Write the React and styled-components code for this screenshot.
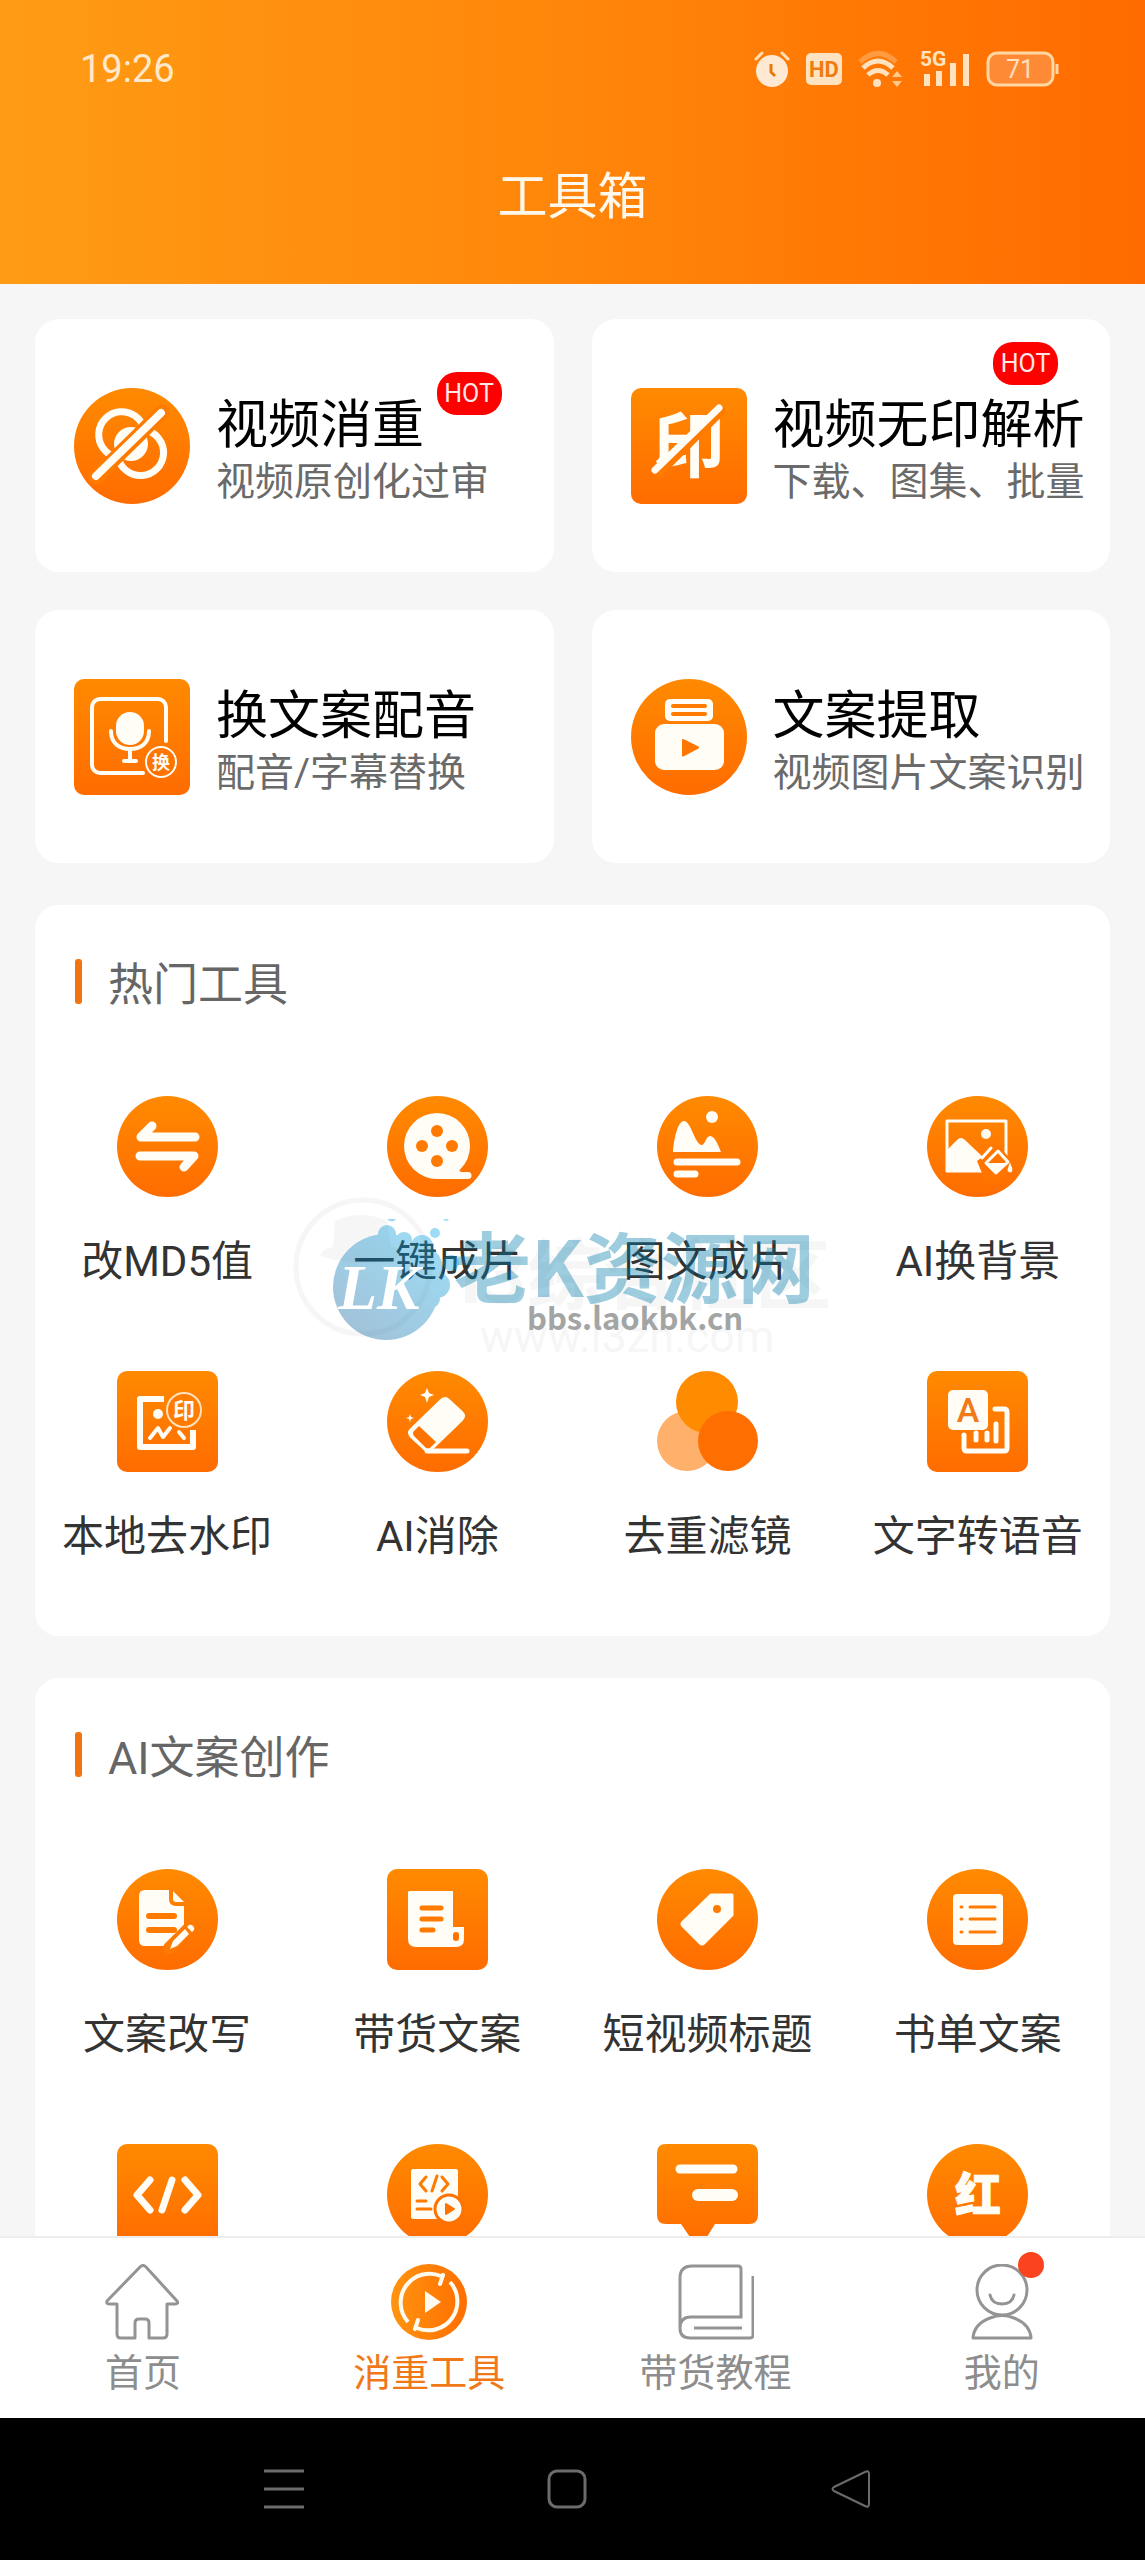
import React from 'react'
import styled, { createGlobalStyle } from 'styled-components'

const GlobalStyle = createGlobalStyle`
  *,
  *::before,
  *::after {
    box-sizing: border-box;
  }
  body {
    margin: 0;
    background-color: #f6f6f6;
    font-family: Roboto, 'Noto Sans CJK SC', sans-serif;
  }
  button {
    border: 0;
    padding: 0;
    background: none;
    font: inherit;
    color: inherit;
    cursor: pointer;
  }
  h1,
  h2,
  p {
    margin: 0;
    font-weight: 400;
  }
  svg {
    display: block;
    flex: none;
  }
`

const Screen = styled.div`
  display: flex;
  flex-direction: column;
  height: 100vh;
`

const Header = styled.header`
  flex: none;
  color: #fff8ec;
  background: linear-gradient(90deg, #ff9b14 0%, #ff860a 50%, #ff6b00 100%);
`

const StatusBar = styled.div`
  display: flex;
  align-items: center;
  justify-content: space-between;
  padding: 0 86px 0 80px;
  height: 138px;
  font-size: 38px;
  color: #ffe9cb;
`

const StatusIcons = styled.div`
  display: flex;
  align-items: center;
  gap: 16px;
`

const PageTitle = styled.h1`
  height: 146px;
  padding-top: 22px;
  font-size: 50px;
  line-height: 74px;
  text-align: center;
`

const Content = styled.main`
  flex: 1;
  min-height: 0;
  padding: 35px 35px 0;
  overflow-y: auto;
  scrollbar-width: none;
`

const Features = styled.div`
  display: grid;
  grid-template-columns: 1fr 1fr;
  gap: 38px;
`

const Feature = styled.button`
  position: relative;
  display: flex;
  align-items: center;
  gap: 26px;
  height: 253px;
  padding-left: 39px;
  border-radius: 24px;
  background-color: #fff;
  text-align: left;
  white-space: nowrap;
`

const FeatureTitle = styled.span`
  display: block;
  font-size: 52px;
  line-height: 72px;
  color: #000;
`

const FeatureDesc = styled.span`
  display: block;
  font-size: 39px;
  line-height: 40px;
  color: #6a6a6a;
`

const HotBadge = styled.span`
  position: absolute;
  right: 52px;
  top: ${({ $raised }) => ($raised ? '23px' : '53px')};
  width: 65px;
  border-radius: 20px;
  background-color: #fd0000;
  color: #ffe6e6;
  font-size: 25px;
  line-height: 43px;
  text-align: center;
`

const Section = styled.section`
  position: relative;
  height: 731px;
  margin-top: 42px;
  padding-top: 54px;
  border-radius: 24px;
  background-color: #fff;
`

const SectionTitle = styled.h2`
  display: flex;
  align-items: center;
  gap: 26px;
  height: 45px;
  padding-left: 40px;
  font-size: 45px;
  color: #666;
  &::before {
    content: '';
    width: 7px;
    height: 45px;
    border-radius: 3px;
    background-color: #f0740f;
  }
`

const ToolGrid = styled.div`
  display: grid;
  grid-template-columns: repeat(4, 1fr);
  margin: 92px -3px 0;
  row-gap: 78px;
`

const Tool = styled.button`
  display: flex;
  flex-direction: column;
  align-items: center;
  gap: 34px;
  font-size: 42px;
  line-height: 62px;
  color: #333;
  white-space: nowrap;
`

const Watermark = styled.div`
  position: absolute;
  left: 258px;
  top: 282px;
  pointer-events: none;
`

const TabBar = styled.nav`
  flex: none;
  display: grid;
  grid-template-columns: repeat(4, 1fr);
  height: 182px;
  border-top: 2px solid #ededed;
  background-color: #fff;
`

const Tab = styled.a`
  display: flex;
  flex-direction: column;
  align-items: center;
  gap: 5px;
  padding-top: 26px;
  font-size: 38px;
  line-height: 56px;
  text-decoration: none;
  color: ${({ $active }) => ($active ? '#f07818' : '#8d8d8d')};
`

const TabIcon = styled.span`
  position: relative;
  display: block;
`

const UnreadDot = styled.span`
  position: absolute;
  top: -12px;
  right: -4px;
  width: 26px;
  height: 26px;
  border-radius: 50%;
  background-color: #fb431f;
`

const SystemNav = styled.div`
  flex: none;
  display: grid;
  grid-template-columns: repeat(3, 1fr);
  place-items: center;
  height: 142px;
  padding: 0 152px 0 142px;
  background-color: #000;
`

const cjk = "'Noto Sans CJK SC', sans-serif"

// Orange plate shared by every tool icon; children are drawn on top in white
function Plate({ round, size = 101, box = 101, radius = 10, shape, children }) {
  const id = React.useId()
  const fill = `url(#${id})`
  return (
    <svg width={size} height={size} viewBox={`0 0 ${box} ${box}`} fill="#fffdf6" stroke="none" strokeLinecap="round" strokeLinejoin="round" aria-hidden="true">
      <defs>
        <linearGradient id={id} x1="0" y1="0" x2="0" y2="1">
          <stop offset="0" stopColor="#ff8a00" />
          <stop offset="1" stopColor="#ff6c00" />
        </linearGradient>
      </defs>
      {shape && <path d={shape} fill={fill} />}
      {!shape && round && <circle cx={box / 2} cy={box / 2} r={box / 2} fill={fill} />}
      {!shape && !round && <rect width={box} height={box} rx={radius} fill={fill} />}
      {children}
    </svg>
  )
}

const white = { fill: 'none', stroke: '#fffdf6' }
const orange = { fill: 'none', stroke: '#ff7b00' }

const DedupeIcon = () => (
  <Plate round size={116} box={116}>
    <g {...white} strokeWidth="7">
      <path d="M42 69A23 23 0 1 1 70 41" />
      <path d="M71 42A23 23 0 1 1 44 69" />
    </g>
    <circle cx="57" cy="56" r="17" />
    <path d="M88 24 22 89" {...orange} strokeWidth="15" />
    <path d="M87 25 22 88" {...white} strokeWidth="8" />
  </Plate>
)

const NoMarkIcon = () => (
  <Plate size={116} box={116}>
    <text x="58" y="83" fontSize="72" fontWeight="700" fontFamily={cjk} textAnchor="middle">印</text>
    <path d="M90 23 28 85" {...orange} strokeWidth="9" />
    <path d="M88 20 24 82" {...white} strokeWidth="7" />
  </Plate>
)

const DubIcon = () => (
  <Plate size={116} box={116}>
    <path d="M92 62V28a8 8 0 0 0-8-8H26a8 8 0 0 0-8 8v58a8 8 0 0 0 8 8h43" {...white} strokeWidth="4" />
    <rect x="42" y="33" width="28" height="33" rx="14" />
    <path d="M37 52c0 12 8 18 19 18s19-6 19-18M56 71v11M50 82h12" {...white} strokeWidth="4" />
    <circle cx="87" cy="83" r="15" {...white} strokeWidth="2" />
    <text x="87" y="90" fontSize="18" fontWeight="700" fontFamily={cjk} textAnchor="middle">换</text>
  </Plate>
)

const ExtractIcon = () => (
  <Plate round size={116} box={116}>
    <rect x="34" y="20" width="48" height="22" rx="5" />
    <path d="M42 27h32M42 35h32" {...orange} strokeWidth="4" />
    <rect x="24" y="45" width="69" height="46" rx="9" />
    <path d="m52 61 15 7.500-15 8z" fill="#ff7600" stroke="#ff7600" strokeWidth="2" />
  </Plate>
)

const Md5Icon = () => (
  <Plate round>
    <path d="M78 41H24L35 30M23 60H77L67 71" {...white} strokeWidth="9" />
  </Plate>
)

const ReelIcon = () => (
  <Plate round>
    <circle cx="50" cy="50" r="33" />
    <path d="M50 83h31a3 3 0 0 0 0-7h-7l-10-10z" />
    <g fill="#ff7a00">
      <circle cx="50" cy="35" r="6" />
      <circle cx="35" cy="50" r="6" />
      <circle cx="65" cy="50" r="6" />
      <circle cx="50" cy="65" r="6" />
    </g>
  </Plate>
)

const ArticleFilmIcon = () => (
  <Plate round>
    <circle cx="55" cy="21" r="6" />
    <path d="M16 56c1-14 5-31 11-31 7 0 11 24 18 24 3 0 4-9 8-9 5 0 8 9 11 16z" />
    <path d="M20 66h60M20 78h18" {...white} strokeWidth="7" />
  </Plate>
)

const BackgroundIcon = () => (
  <Plate round>
    <rect x="20" y="25" width="59" height="50" {...white} strokeWidth="3" />
    <circle cx="59" cy="38" r="5" />
    <path d="m20 54 10-10q4-4 8 0l20 19v13H20z" />
    <path d="m71 50 17 17-17 20H59L50 65z" fill="#ff7500" />
    <path d="M64 52 55 62" {...white} strokeWidth="3" />
    <path d="m71 55 10 11-12 11-10-10z" {...white} strokeWidth="3" />
    <path d="M60 67h20L69 77z" />
    <path d="M83 68q-4 8 0 8t0-8z" stroke="#fffdf6" />
  </Plate>
)

const LocalMarkIcon = () => (
  <Plate>
    <path d="M47 28H23v48h53V59" {...white} strokeWidth="6" strokeLinecap="butt" />
    <circle cx="41" cy="43" r="5" />
    <path d="m33 67 8-10 5 9 7-9" {...white} strokeWidth="4" />
    <path d="m62 61 5 6" {...white} strokeWidth="4" />
    <circle cx="67" cy="39" r="17" fill="#ff7c00" stroke="#ffe2bd" strokeWidth="2" />
    <text x="67" y="47" fontSize="22" fontWeight="700" fontFamily={cjk} textAnchor="middle">印</text>
  </Plate>
)

const EraserIcon = () => (
  <Plate round>
    <path d="m54 29-30 29q-4 4 0 8l13 12q4 4 8 0l30-29q4-4 0-8L62 29q-4-4-8 0z" stroke="#fffdf6" strokeWidth="2" />
    <path d="m32 55 17 16-6 6q-2 1-4 0L27 65q-2-3 0-5z" fill="#ff7400" />
    <path d="M40 80h40" {...white} strokeWidth="5" />
    <path d="m40 17 2 5 5 2-5 2-2 6-2-6-5-2 5-2zM23 43l1 3 3 1-3 1-1 3-1-3-3-1 3-1z" />
  </Plate>
)

const FilterIcon = () => (
  <svg width="101" height="101" viewBox="0 0 101 101" aria-hidden="true">
    <circle cx="30" cy="70" r="30" fill="#ffb06b" />
    <circle cx="50" cy="31" r="31" fill="#ff8b00" />
    <circle cx="71" cy="70" r="30" fill="#ff6e00" />
  </svg>
)

const SpeechIcon = () => (
  <Plate>
    <path d="M68 38h9q3 0 3 3v36q0 3-3 3H40q-3 0-3-3V64" {...white} strokeWidth="5" />
    <path d="M49 62v7M60 62v7M69 53v17" {...white} strokeWidth="5" />
    <rect x="21" y="19" width="40" height="40" rx="5" />
    <text x="41" y="51" fontSize="34" fontWeight="500" fill="#f17a18" textAnchor="middle">A</text>
  </Plate>
)

const RewriteIcon = () => (
  <Plate round>
    <path d="M28 21h24v9q0 7 7 7h8v21L53 77H28q-6 0-6-6V27q0-6 6-6z" />
    <path d="m56 22 11 11h-8q-3 0-3-3z" />
    <path d="M32 47h25M32 61h25" {...orange} strokeWidth="6" />
    <path d="m73 58-21 21" {...orange} strokeWidth="12" />
    <path d="m68 60 4 5-12 12-7 3 3-8zM70 58l2-2q2-1 4 1t1 4l-2 2z" />
  </Plate>
)

const GoodsCopyIcon = () => (
  <Plate>
    <path d="M22 22h44v36h11v12q0 8-8 8H29q-8 0-8-8V23z" />
    <path d="M35 39h19M35 50h19M35 61h11" {...orange} strokeWidth="5" />
    <rect x="66" y="63" width="6" height="9" rx="3" fill="#ff7200" />
  </Plate>
)

const TagIcon = () => (
  <Plate round>
    <path d="M54 26 26 53q-2 2 0 4l17 17q2 2 4 0l28-28V26z" stroke="#fffdf6" strokeWidth="3" />
    <circle cx="60" cy="40" r="4" fill="#ff7b00" />
  </Plate>
)

const ListIcon = () => (
  <Plate round>
    <rect x="26" y="25" width="50" height="51" rx="4" />
    <path d="M34 38h1M34 50h1M34 63h1M43 38h25M43 50h25M43 63h25" {...orange} strokeWidth="3" />
  </Plate>
)

const CodeIcon = () => (
  <Plate>
    <path d="M33 36 20 51l13 15M55 36 45 66M68 36l13 15-13 15" {...white} strokeWidth="7" />
  </Plate>
)

const CodeDocIcon = () => (
  <Plate round>
    <rect x="24" y="25" width="47" height="50" rx="2" />
    <path d="m39 33-6 7 6 7M50 32l-5 15M55 33l6 7-6 7M30 57h9M30 65h14" {...orange} strokeWidth="3" />
    <circle cx="62" cy="65" r="14" stroke="#ff7200" strokeWidth="3" />
    <path d="M59 60v10l8-5z" fill="#ff7200" stroke="#ff7200" strokeWidth="2" />
  </Plate>
)

const BubbleIcon = () => (
  <Plate shape="M9 0h83q9 0 9 9v62q0 9-9 9H58L48 96q-6 7-13 0L24 80H9q-9 0-9-9V9q0-9 9-9z">
    <path d="M23 25h53" {...white} strokeWidth="9" />
    <path d="M41 51h34" {...white} strokeWidth="12" />
  </Plate>
)

const RedIcon = () => (
  <Plate round>
    <text x="51" y="67" fontSize="46" fontWeight="900" fontFamily={cjk} textAnchor="middle" stroke="#fffdf6">红</text>
  </Plate>
)

const StatusGlyphs = () => (
  <StatusIcons>
    <svg width="36" height="36" viewBox="0 0 36 36" fill="none" aria-hidden="true">
      <circle cx="18" cy="20" r="16" fill="#ffe9d2" />
      <path d="m2 8 6-6M34 8l-6-6" stroke="#ffe0b8" strokeWidth="3" strokeLinecap="round" />
      <path d="M17 13v8l4 4" stroke="#e8780a" strokeWidth="3" />
    </svg>
    <svg width="36" height="32" viewBox="0 0 36 32" aria-hidden="true">
      <rect width="36" height="32" rx="5" fill="#ffe3c0" />
      <text x="18" y="24" fontSize="22" fontWeight="700" fill="#ef7c10" textAnchor="middle">HD</text>
    </svg>
    <svg width="46" height="38" viewBox="0 0 46 38" fill="none" strokeWidth="5" aria-hidden="true">
      <path d="M2 12q18-17 36 0" stroke="#ff9a40" />
      <path d="M5 18q15-14 30 0" stroke="#ffe3c0" />
      <path d="M10 25q10-9 20 0" stroke="#ffe3c0" />
      <circle cx="19" cy="33" r="4" fill="#ffe3c0" />
      <path d="m34 27 5-6 5 6zM34 31h10l-5 6z" fill="#ffc98c" />
    </svg>
    <svg width="50" height="44" viewBox="0 -4 50 44" fill="#ffe3c0" aria-hidden="true">
      <text x="0" y="15" fontSize="21" fontWeight="700">5G</text>
      <path d="M4 23h6v12H4zM16 20h6v15h-6zM30 12h6v23h-6zM43 3h6v32h-6z" />
    </svg>
    <svg width="73" height="36" viewBox="0 0 73 36" aria-hidden="true">
      <rect x="2" y="2" width="65" height="32" rx="9" fill="#ff8a35" stroke="#ffd7a3" strokeWidth="3" />
      <path d="M71 13v10" stroke="#ffd7a3" strokeWidth="3" />
      <text x="34" y="27" fontSize="25" fill="#ffe0bd" textAnchor="middle">71</text>
    </svg>
  </StatusIcons>
)

const HomeTabIcon = () => (
  <svg width="76" height="76" viewBox="0 0 76 76" fill="none" stroke="#949494" strokeWidth="3" strokeLinejoin="round" aria-hidden="true">
    <path d="M35 3 2 37q-1 3 2 3h8v30q0 4 4 4h14V59q0-4 4-4h6q4 0 4 4v15h14q4 0 4-4V40h8q4 0 2-3L41 3q-3-3-6 0z" />
  </svg>
)

const ToolsTabIcon = () => (
  <svg width="76" height="76" viewBox="0 0 76 76" fill="none" aria-hidden="true">
    <defs>
      <linearGradient id="toolsTab" x1="0" y1="0" x2="1" y2="0">
        <stop offset="0" stopColor="#ff9410" />
        <stop offset="1" stopColor="#ff6e00" />
      </linearGradient>
    </defs>
    <circle cx="38" cy="38" r="38" fill="url(#toolsTab)" />
    <g stroke="#fffaf0" strokeWidth="4">
      <path d="M17 58A29 29 0 0 1 50 12M59 18A29 29 0 0 1 26 64" />
      <path d="m52 11-3 9M24 65l3-9" strokeLinecap="round" />
    </g>
    <path d="m34 27 16 11-16 11z" fill="#fffaf0" />
  </svg>
)

const CourseTabIcon = () => (
  <svg width="76" height="76" viewBox="0 0 76 76" fill="none" stroke="#949494" strokeWidth="3" aria-hidden="true">
    <path d="M2 64V14Q2 2 14 2h46q3 0 3 3v48H13Q2 53 2 64q0 10 10 10h60q3 0 3-3V12M16 64h48" />
  </svg>
)

const MeTabIcon = () => (
  <svg width="76" height="76" viewBox="0 0 76 76" fill="none" stroke="#949494" strokeWidth="3" strokeLinejoin="round" aria-hidden="true">
    <circle cx="38" cy="26" r="25" />
    <path d="M26 31q2 9 12 9t12-9" strokeLinecap="round" />
    <path d="M26 54Q10 60 9 74h58q-1-14-17-20-12-5-24 0z" />
  </svg>
)

const LogoWatermark = () => (
  <Watermark aria-hidden="true">
    <svg width="560" height="190" viewBox="0 0 560 190" fill="none">
      <defs>
        <linearGradient id="drop" gradientUnits="userSpaceOnUse" x1="140" y1="50" x2="60" y2="150">
          <stop offset="0" stopColor="#00a5e6" />
          <stop offset="1" stopColor="#0b5f99" />
        </linearGradient>
      </defs>
      <g opacity=".03">
        <circle cx="70" cy="80" r="67" stroke="#000" strokeWidth="5" />
        <path d="M42 34q26-12 52 0l4 26q12 2 12 9-40 14-82 0 0-7 12-9z" fill="#000" />
        <text x="166" y="116" fontSize="76" fontWeight="700" fontFamily={cjk} fill="#000">i3综合社区</text>
        <text x="187" y="165" fontSize="45" fill="#000">www.i3zh.com</text>
      </g>
      <g fill="url(#drop)" opacity=".38">
        <circle cx="93" cy="100" r="53" />
        <circle cx="94" cy="47" r="9" />
        <circle cx="111" cy="53" r="8" />
        <circle cx="129" cy="59" r="11" />
        <circle cx="142" cy="46" r="5" />
        <circle cx="126" cy="82" r="24" />
        <circle cx="158" cy="76" r="8" />
        <circle cx="144" cy="98" r="13" />
        <circle cx="138" cy="112" r="9" />
        <path d="M94 32h9q-4 5-9 0zM150 32h6q-3 4-6 0z" />
      </g>
      <text x="45" y="122" fontSize="64" fontWeight="700" fontStyle="italic" fontFamily="'Liberation Serif', serif" fill="#fff">LK</text>
      <text x="161" y="110" fontSize="77" fontWeight="700" fontFamily={cjk} fill="#007dab" opacity=".38">老K资源网</text>
      <text x="234" y="143" fontSize="31" fontWeight="700" fontFamily={cjk} fill="#a3a5a5">bbs.laokbk.cn</text>
    </svg>
  </Watermark>
)

const features = [
  { title: '视频消重', desc: '视频原创化过审', icon: DedupeIcon, hot: true },
  { title: '视频无印解析', desc: '下载、图集、批量', icon: NoMarkIcon, hot: true, raised: true },
  { title: '换文案配音', desc: '配音/字幕替换', icon: DubIcon },
  { title: '文案提取', desc: '视频图片文案识别', icon: ExtractIcon },
]

const hotTools = [
  { name: '改MD5值', icon: Md5Icon },
  { name: '一键成片', icon: ReelIcon },
  { name: '图文成片', icon: ArticleFilmIcon },
  { name: 'AI换背景', icon: BackgroundIcon },
  { name: '本地去水印', icon: LocalMarkIcon },
  { name: 'AI消除', icon: EraserIcon },
  { name: '去重滤镜', icon: FilterIcon },
  { name: '文字转语音', icon: SpeechIcon },
]

const writingTools = [
  { name: '文案改写', icon: RewriteIcon },
  { name: '带货文案', icon: GoodsCopyIcon },
  { name: '短视频标题', icon: TagIcon },
  { name: '书单文案', icon: ListIcon },
  { icon: CodeIcon },
  { icon: CodeDocIcon },
  { icon: BubbleIcon },
  { icon: RedIcon },
]

const tabs = [
  { name: '首页', icon: HomeTabIcon },
  { name: '消重工具', icon: ToolsTabIcon, active: true },
  { name: '带货教程', icon: CourseTabIcon },
  { name: '我的', icon: MeTabIcon, unread: true },
]

function ToolSection({ title, tools, children }) {
  return (
    <Section>
      <SectionTitle>{title}</SectionTitle>
      <ToolGrid>
        {tools.map(({ name, icon: Icon }, i) => (
          <Tool key={i} type="button">
            <Icon />
            {name}
          </Tool>
        ))}
      </ToolGrid>
      {children}
    </Section>
  )
}

function App() {
  return (
    <Screen>
      <GlobalStyle />
      <Header>
        <StatusBar>
          <span>19:26</span>
          <StatusGlyphs />
        </StatusBar>
        <PageTitle>工具箱</PageTitle>
      </Header>
      <Content>
        <Features>
          {features.map(({ title, desc, icon: Icon, hot, raised }) => (
            <Feature key={title} type="button">
              <Icon />
              <span>
                <FeatureTitle>{title}</FeatureTitle>
                <FeatureDesc>{desc}</FeatureDesc>
              </span>
              {hot && <HotBadge $raised={raised}>HOT</HotBadge>}
            </Feature>
          ))}
        </Features>
        <ToolSection title="热门工具" tools={hotTools}>
          <LogoWatermark />
        </ToolSection>
        <ToolSection title="AI文案创作" tools={writingTools} />
      </Content>
      <TabBar>
        {tabs.map(({ name, icon: Icon, active, unread }) => (
          <Tab key={name} href="#" $active={active}>
            <TabIcon>
              <Icon />
              {unread && <UnreadDot />}
            </TabIcon>
            {name}
          </Tab>
        ))}
      </TabBar>
      <SystemNav>
        <button type="button" aria-label="Recent apps">
          <svg width="40" height="40" viewBox="0 0 40 40" stroke="#6b6b6b" strokeWidth="3">
            <path d="M0 2h40M0 20h40M0 38h40" />
          </svg>
        </button>
        <button type="button" aria-label="Home">
          <svg width="40" height="40" viewBox="0 0 40 40" fill="none" stroke="#6b6b6b" strokeWidth="3">
            <rect x="2" y="2" width="36" height="36" rx="8" />
          </svg>
        </button>
        <button type="button" aria-label="Back">
          <svg width="40" height="40" viewBox="0 0 40 40" fill="none" stroke="#6b6b6b" strokeWidth="2" strokeLinejoin="round">
            <path d="M3 18 34 3q4-2 4 2v30q0 4-4 2L3 22q-3-2 0-4z" />
          </svg>
        </button>
      </SystemNav>
    </Screen>
  )
}

export default App
